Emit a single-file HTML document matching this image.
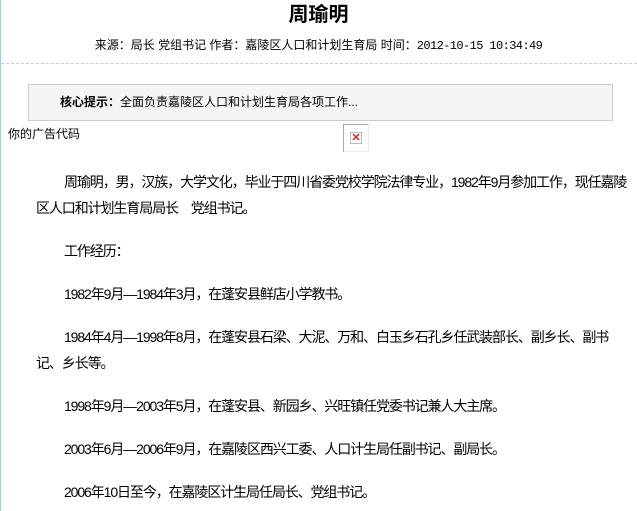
<!DOCTYPE html>
<html><head><meta charset="utf-8"><style>
html,body{margin:0;padding:0;background:#fff;width:637px;height:511px;overflow:hidden}
body{font-family:"Liberation Sans","Noto Sans CJK SC","WenQuanYi Zen Hei",sans-serif;color:#000;position:relative}
.lb{position:absolute;left:0;top:0;width:1px;height:511px;background:#9cd0e8}
h1{position:absolute;top:2px;left:0;width:637px;text-align:center;font-size:20px;font-weight:bold;margin:0;line-height:26px}
.meta{position:absolute;top:37px;left:0;width:637px;text-align:center;font-size:12px;line-height:16px}
.meta .m{font-family:"Liberation Mono","Noto Sans CJK SC",monospace;letter-spacing:-0.6px}
.dash{position:absolute;top:63px;left:1px;width:636px;border-top:1px dashed #ccc}
.box{position:absolute;left:28px;top:84px;width:583px;height:35px;background:#f5f5f5;border:1px solid #ccc;font-size:12px;line-height:35px}
.box span{margin-left:31px}
.ad{position:absolute;left:8px;top:126px;font-size:12px;line-height:16px}
.img{position:absolute;left:343px;top:124px;width:26px;height:28px;border:1px solid #aaa;border-right-color:#eee;border-bottom-color:#eee;box-sizing:border-box}
.img i{position:absolute;left:6px;top:7px;width:12px;height:12px;border:1px solid #bbb;box-sizing:border-box;color:#e02020;font-style:normal;font-size:11px;line-height:10px;text-align:center;font-weight:bold}
.c{position:absolute;left:36px;top:169px;width:600px;font-size:14px;line-height:26px;white-space:nowrap;letter-spacing:-1.1px}
.c p{margin:0 0 17px;text-indent:28px}
</style></head><body>
<div class="lb"></div>
<h1>周瑜明</h1>
<div class="meta">来源：局长 党组书记 作者：嘉陵区人口和计划生育局 时间：<span class="m">2012-10-15 10:34:49</span></div>
<div class="dash"></div>
<div class="box"><span><b>核心提示：</b>全面负责嘉陵区人口和计划生育局各项工作...</span></div>
<div class="ad">你的广告代码</div>
<div class="img"><i>✕</i></div>
<div class="c">
<p>周瑜明，男，汉族，大学文化，毕业于四川省委党校学院法律专业，1982年9月参加工作，现任嘉陵<br>区人口和计划生育局局长　党组书记。</p>
<p>工作经历：</p>
<p>1982年9月—1984年3月，在蓬安县鲜店小学教书。</p>
<p>1984年4月—1998年8月，在蓬安县石梁、大泥、万和、白玉乡石孔乡任武装部长、副乡长、副书<br>记、乡长等。</p>
<p>1998年9月—2003年5月，在蓬安县、新园乡、兴旺镇任党委书记兼人大主席。</p>
<p>2003年6月—2006年9月，在嘉陵区西兴工委、人口计生局任副书记、副局长。</p>
<p>2006年10日至今，在嘉陵区计生局任局长、党组书记。</p>
</div>
</body></html>
